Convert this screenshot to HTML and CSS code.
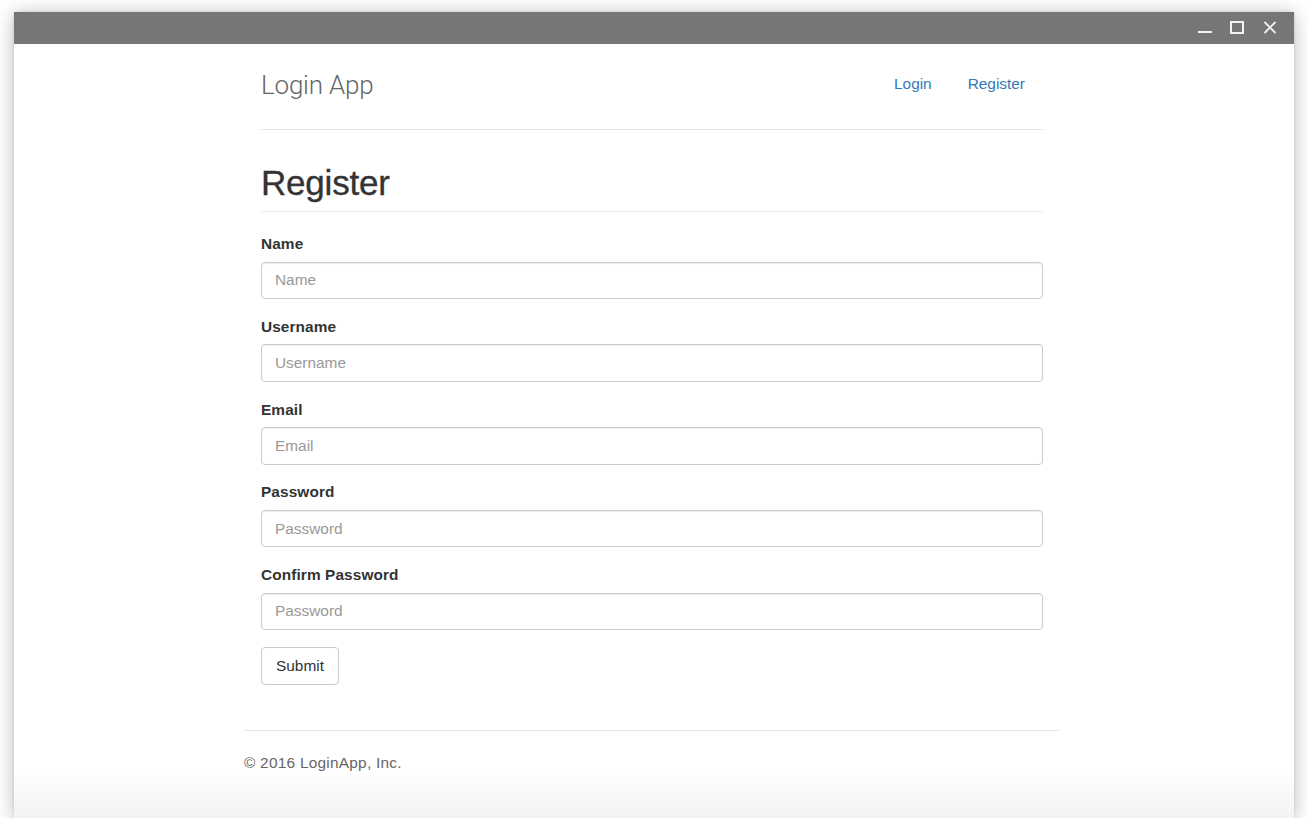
FILE: index.html
```html
<!DOCTYPE html>
<html lang="en">
<head>
<meta charset="utf-8">
<title>Login App - Register</title>
<link rel="stylesheet" href="styles.css">
</head>
<body>
<div class="window">
  <div class="titlebar">
    <span class="ctl ctl-min" aria-label="Minimize"><svg width="14" height="14" viewBox="0 0 14 14"><rect x="0" y="10" width="14" height="2" fill="#f2f2f2"/></svg></span>
    <span class="ctl ctl-max" aria-label="Maximize"><svg width="14" height="14" viewBox="0 0 14 14"><rect x="1" y="1" width="12" height="11" fill="none" stroke="#f2f2f2" stroke-width="2"/></svg></span>
    <span class="ctl ctl-close" aria-label="Close"><svg width="14" height="14" viewBox="0 0 14 14"><path d="M1.5 1 L12.5 12 M12.5 1 L1.5 12" stroke="#f2f2f2" stroke-width="1.8" fill="none"/></svg></span>
  </div>
  <div class="page">
    <div class="container">
      <header class="header">
        <h3 class="brand">Login App</h3>
        <nav class="nav">
          <a href="#" class="nav-link">Login</a>
          <a href="#" class="nav-link">Register</a>
        </nav>
      </header>
      <main class="main">
        <h1 class="page-header">Register</h1>
        <form class="form">
          <div class="form-group">
            <label class="label">Name</label>
            <input class="input" type="text" placeholder="Name">
          </div>
          <div class="form-group">
            <label class="label">Username</label>
            <input class="input" type="text" placeholder="Username">
          </div>
          <div class="form-group">
            <label class="label">Email</label>
            <input class="input" type="email" placeholder="Email">
          </div>
          <div class="form-group">
            <label class="label">Password</label>
            <input class="input" type="password" placeholder="Password">
          </div>
          <div class="form-group">
            <label class="label">Confirm Password</label>
            <input class="input" type="password" placeholder="Password">
          </div>
          <button type="button" class="btn">Submit</button>
        </form>
      </main>
      <footer class="footer">
        <p class="copy">&copy; 2016 LoginApp, Inc.</p>
      </footer>
    </div>
  </div>
</div>
</body>
</html>
```

FILE: styles.css
```css
* { box-sizing: border-box; }
html, body { margin: 0; padding: 0; background: #ffffff; }
body {
  font-family: "Liberation Sans", Arial, sans-serif;
  color: #333333;
  font-size: 15.4px;
  line-height: 22px;
  padding-top: 12px;
}
.window {
  margin-left: 14px;
  width: 1280px;
  height: 806px;
  background: linear-gradient(to bottom, #ffffff 0, #ffffff 760px, #f3f3f3 806px);
  box-shadow: 0 2px 18px rgba(0, 0, 0, 0.28), 0 0 2px rgba(0, 0, 0, 0.12);
  display: flex;
  flex-direction: column;
}
.titlebar {
  height: 32px;
  background: #767676;
  display: flex;
  justify-content: flex-end;
  align-items: flex-start;
  padding-right: 17px;
  gap: 18px;
}
.ctl { display: block; width: 14px; height: 14px; margin-top: 9px; }
.ctl svg { display: block; }
.ctl-close { margin-left: 1px; }
.page { flex: 1; }
.container {
  width: 815px;
  margin-left: 230px;
}
.header {
  margin: 0 16px 0 17px;
  height: 86px;
  border-bottom: 1px solid #e5e5e5;
  display: flex;
  align-items: flex-start;
  justify-content: space-between;
}
.brand {
  margin: 0;
  padding-top: 26px;
  font-family: Roboto, "Liberation Sans", sans-serif;
  font-weight: 300;
  font-size: 26px;
  line-height: 30px;
  color: #666666;
  letter-spacing: -0.2px;
}
.nav {
  display: flex;
  gap: 36px;
  margin-right: 18px;
  padding-top: 29px;
}
.nav-link {
  color: #337ab7;
  text-decoration: none;
  font-size: 15.4px;
  line-height: 22px;
}
.main {
  margin: 0 16px 0 17px;
}
.page-header {
  margin: 34px 0 0;
  padding-bottom: 9px;
  border-bottom: 1px solid #eeeeee;
  font-family: "Liberation Sans", Arial, sans-serif;
  font-weight: 400;
  -webkit-text-stroke: 0.35px #333333;
  font-size: 35px;
  line-height: 38px;
  color: #333333;
  letter-spacing: -0.2px;
}
.form {
  padding-top: 21px;
  display: flex;
  flex-direction: column;
  align-items: flex-start;
}
.form-group {
  width: 100%;
  margin-bottom: 16.75px;
}
.label {
  display: block;
  font-weight: bold;
  line-height: 22px;
  margin-bottom: 6.5px;
  letter-spacing: 0.1px;
}
.input {
  display: block;
  width: 100%;
  height: 37.5px;
  padding: 0 13px;
  border: 1px solid #cccccc;
  border-radius: 4px;
  font-family: "Liberation Sans", Arial, sans-serif;
  font-size: 15.4px;
  color: #555555;
  background: #ffffff;
  box-shadow: inset 0 1px 1px rgba(0, 0, 0, 0.075);
}
.input::placeholder { color: #999999; }
.btn {
  height: 38px;
  width: 78px;
  padding: 0;
  border: 1px solid #cccccc;
  border-radius: 4px;
  background: #ffffff;
  color: #333333;
  font-family: "Liberation Sans", Arial, sans-serif;
  font-size: 15.4px;
}
.footer {
  margin-top: 45px;
  border-top: 1px solid #e5e5e5;
  padding-top: 21px;
}
.copy {
  margin: 0;
  color: #666666;
  line-height: 22px;
  letter-spacing: 0.25px;
}
```
